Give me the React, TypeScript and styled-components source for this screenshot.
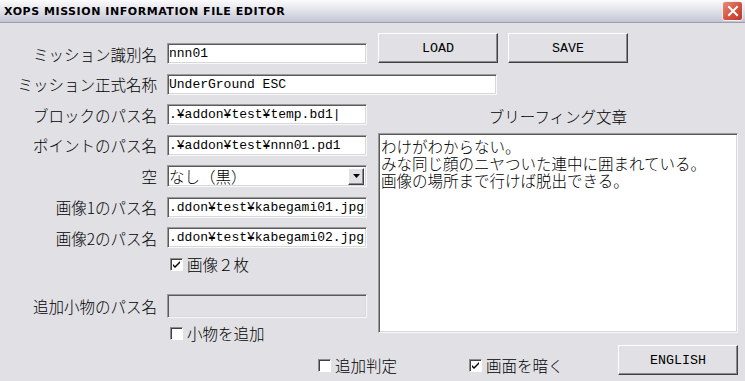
import React from 'react'
import styled, { createGlobalStyle } from 'styled-components'

const face = '#e1e0e5'

const GlobalStyle = createGlobalStyle`
  html, body {
    margin: 0;
    padding: 0;
    background: ${face};
  }
`

const jp = `"Noto Sans CJK JP", "Noto Sans", sans-serif`
const mono = `"Liberation Mono", "DejaVu Sans Mono", monospace`

const Window = styled.div`
  width: 745px;
  height: 381px;
  overflow: hidden;
  background: ${face};
  font-family: ${jp};
  font-weight: 300;
  color: #000;
`

const TitleBar = styled.div`
  height: 22px;
  display: flex;
  align-items: center;
  justify-content: space-between;
  padding: 0 2px 0 4px;
  background: linear-gradient(#fbfbfd 0%, #e9e9f0 35%, #d2d3de 75%, #c3c4d2 100%);
  border-bottom: 1px solid #9c9db0;
`

const Title = styled.span`
  font-family: "DejaVu Sans", sans-serif;
  font-weight: bold;
  font-size: 11px;
  letter-spacing: 0.55px;
`

const CloseButton = styled.div`
  width: 19px;
  height: 18px;
  border: 1px solid #f4f0f0;
  border-radius: 3px;
  background: linear-gradient(135deg, #e98a7a 0%, #d4523f 55%, #b83a2a 100%);
  display: flex;
  align-items: center;
  justify-content: center;
`

const Main = styled.div`
  display: flex;
  padding-top: 10px;
`

const LeftColumn = styled.div`
  width: 378px;
  padding-top: 10px;
  display: flex;
  flex-direction: column;
`

const FieldStack = styled.div`
  display: flex;
  flex-direction: column;
  gap: 9.5px;
`

const FieldRow = styled.div<{ $mt?: number }>`
  display: grid;
  grid-template-columns: 157px auto;
  column-gap: 10px;
  align-items: center;
  margin-top: ${(p) => p.$mt ?? 0}px;
`

const Label = styled.span`
  font-size: 15.5px;
  line-height: 18px;
  text-align: right;
  white-space: nowrap;
`

const TextBox = styled.div<{ $w: number; $h?: number; $disabled?: boolean }>`
  box-sizing: border-box;
  width: ${(p) => p.$w}px;
  height: ${(p) => p.$h ?? 21}px;
  border: 1px solid;
  border-color: #9a9a9a #f8f8f8 #f8f8f8 #9a9a9a;
  box-shadow: inset 1px 1px 0 #5a5a5a, inset -1px -1px 0 #d8d7dc;
  background: ${(p) => (p.$disabled ? face : '#fff')};
  padding: 0 0 0 1px;
  font-family: ${mono};
  font-weight: normal;
  font-size: 13px;
  line-height: 19px;
  white-space: nowrap;
  overflow: hidden;
`

const SelectBox = styled(TextBox)`
  display: flex;
  align-items: center;
  justify-content: space-between;
  padding-right: 2px;
  font-family: ${jp};
  font-weight: 300;
  font-size: 15.5px;
`

const ArrowButton = styled.div`
  box-sizing: border-box;
  width: 16px;
  height: 17px;
  background: ${face};
  border: 1px solid;
  border-color: #fff #404040 #404040 #fff;
  box-shadow: inset -1px -1px 0 #8c8c8c;
  display: flex;
  align-items: center;
  justify-content: center;
`

const CheckRow = styled.label<{ $ml?: number; $mt?: number; $w?: number }>`
  display: flex;
  align-items: center;
  gap: 4px;
  margin-left: ${(p) => p.$ml ?? 0}px;
  margin-top: ${(p) => p.$mt ?? 0}px;
  width: ${(p) => (p.$w ? `${p.$w}px` : 'auto')};
  height: 16px;
  font-size: 15.5px;
  white-space: nowrap;
`

const Box = styled.span`
  box-sizing: border-box;
  width: 13px;
  height: 13px;
  background: #fff;
  border: 1px solid;
  border-color: #8c8c8c #fff #fff #8c8c8c;
  box-shadow: inset 1px 1px 0 #404040;
  display: flex;
  align-items: center;
  justify-content: center;
  flex: none;
`

const RightColumn = styled.div`
  width: 360px;
  display: flex;
  flex-direction: column;
`

const ButtonRow = styled.div`
  display: flex;
  gap: 10px;
`

const Button = styled.div<{ $w?: number }>`
  box-sizing: border-box;
  width: ${(p) => p.$w ?? 120}px;
  height: 30px;
  background: ${face};
  border: 1px solid;
  border-color: #fff #404040 #404040 #fff;
  box-shadow: inset -1px -1px 0 #8c8c8c;
  display: flex;
  align-items: center;
  justify-content: center;
  font-family: ${mono};
  font-weight: normal;
  font-size: 13.33px;
`

const BriefLabel = styled.div`
  margin-top: 44px;
  height: 26px;
  font-size: 15.5px;
  line-height: 18px;
  text-align: center;
`

const BriefText = styled.div`
  box-sizing: border-box;
  width: 360px;
  height: 200px;
  background: #fff;
  border: 1px solid;
  border-color: #9a9a9a #f8f8f8 #f8f8f8 #9a9a9a;
  box-shadow: inset 1px 1px 0 #5a5a5a, inset -1px -1px 0 #d8d7dc;
  padding: 4px 2px;
  font-size: 15.5px;
  line-height: 17px;
  white-space: pre-wrap;
`

const Footer = styled.div`
  display: flex;
  align-items: flex-start;
  padding-left: 318px;
  margin-top: 4px;
`

const FooterCheck = styled(CheckRow)`
  margin-top: 12px;
`

const Check = ({ on }: { on?: boolean }) => (
  <Box>
    {on && (
      <svg width="9" height="9" viewBox="0 0 9 9">
        <path d="M1 4 L3 6 L8 1 L8 3 L3 8 L1 6 Z" fill="#000" />
      </svg>
    )}
  </Box>
)

const fields = [
  { label: 'ミッション識別名', value: 'nnn01', w: 200 },
  { label: 'ミッション正式名称', value: 'UnderGround ESC', w: 330 },
  { label: 'ブロックのパス名', value: '.¥addon¥test¥temp.bd1|', w: 200 },
  { label: 'ポイントのパス名', value: '.¥addon¥test¥nnn01.pd1', w: 200 },
]

const images = [
  { label: '画像1のパス名', value: '.ddon¥test¥kabegami01.jpg' },
  { label: '画像2のパス名', value: '.ddon¥test¥kabegami02.jpg' },
]

const briefing = 'わけがわからない。\nみな同じ顔のニヤついた連中に囲まれている。\n画像の場所まで行けば脱出できる。'

export default function App() {
  return (
    <Window>
      <GlobalStyle />
      <TitleBar>
        <Title>XOPS MISSION INFORMATION FILE EDITOR</Title>
        <CloseButton>
          <svg width="12" height="12" viewBox="0 0 12 12">
            <path d="M2 2 L10 10 M10 2 L2 10" stroke="#fff" strokeWidth="2" strokeLinecap="square" />
          </svg>
        </CloseButton>
      </TitleBar>
      <Main>
        <LeftColumn>
          <FieldStack>
            {fields.map((f) => (
              <FieldRow key={f.label}>
                <Label>{f.label}</Label>
                <TextBox $w={f.w}>{f.value}</TextBox>
              </FieldRow>
            ))}
            <FieldRow>
              <Label>空</Label>
              <SelectBox $w={200} $h={22}>
                <span>なし（黒）</span>
                <ArrowButton>
                  <svg width="7" height="4" viewBox="0 0 7 4">
                    <path d="M0 0 H7 L3.5 4 Z" fill="#000" />
                  </svg>
                </ArrowButton>
              </SelectBox>
            </FieldRow>
            {images.map((f) => (
              <FieldRow key={f.label}>
                <Label>{f.label}</Label>
                <TextBox $w={200}>{f.value}</TextBox>
              </FieldRow>
            ))}
          </FieldStack>
          <CheckRow $ml={170} $mt={8}>
            <Check on />
            画像２枚
          </CheckRow>
          <FieldRow $mt={22}>
            <Label>追加小物のパス名</Label>
            <TextBox $w={200} $h={24} $disabled />
          </FieldRow>
          <CheckRow $ml={170} $mt={7}>
            <Check />
            小物を追加
          </CheckRow>
        </LeftColumn>
        <RightColumn>
          <ButtonRow>
            <Button>LOAD</Button>
            <Button>SAVE</Button>
          </ButtonRow>
          <BriefLabel>ブリーフィング文章</BriefLabel>
          <BriefText>{briefing}</BriefText>
        </RightColumn>
      </Main>
      <Footer>
        <FooterCheck $w={151}>
          <Check />
          追加判定
        </FooterCheck>
        <FooterCheck $w={149}>
          <Check on />
          画面を暗く
        </FooterCheck>
        <Button $w={120}>ENGLISH</Button>
      </Footer>
    </Window>
  )
}
